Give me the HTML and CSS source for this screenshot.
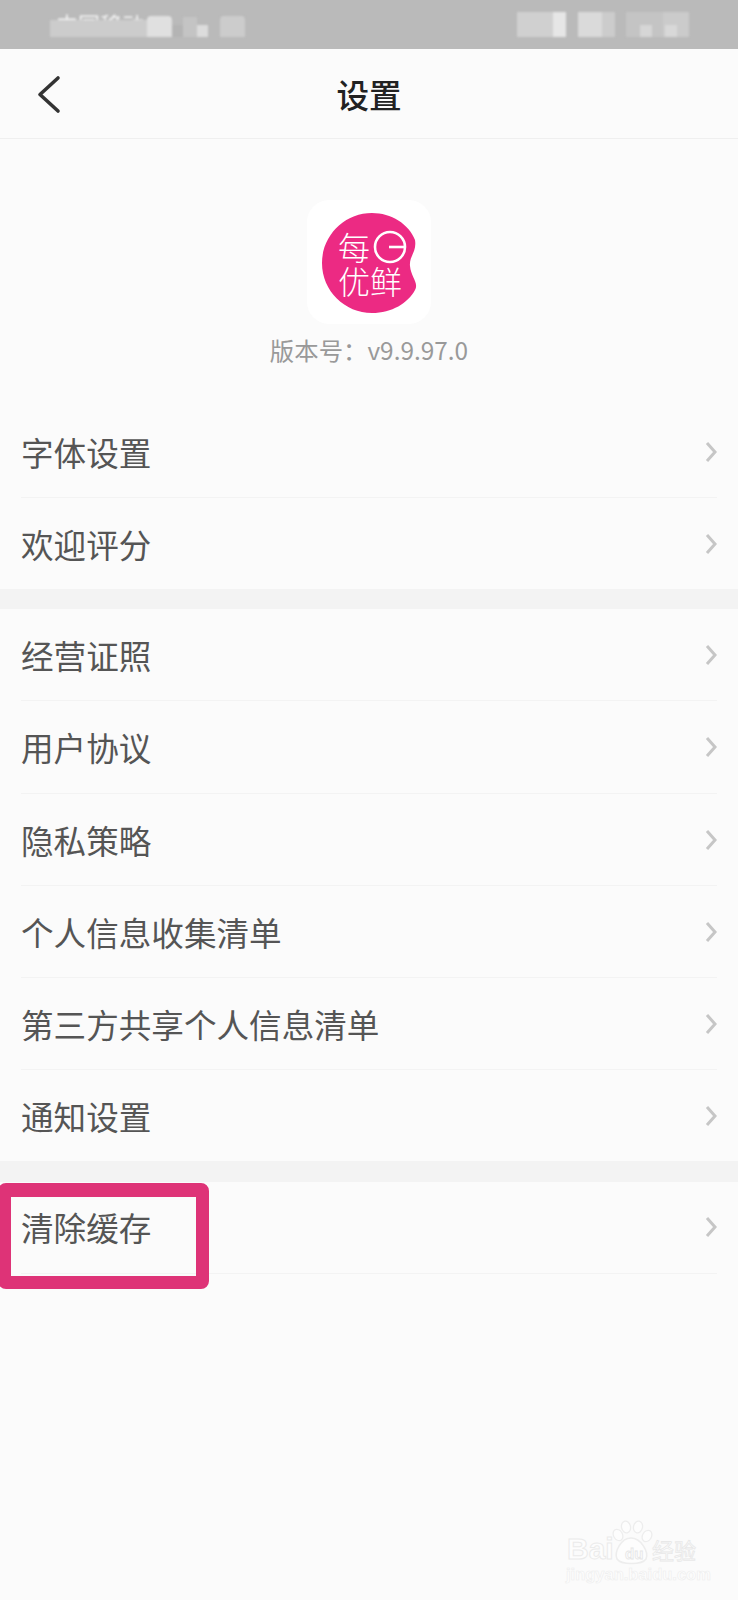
FILE: index.html
```html
<!DOCTYPE html>
<html lang="zh-CN">
<head>
<meta charset="utf-8">
<title>设置</title>
<link rel="stylesheet" href="styles.css">
</head>
<body>
<div class="page">
  <div class="status">
    <div class="mosaic mosaic-left">
      <span class="carrier">中国移动</span>
      <i class="m m1"></i><i class="m m2"></i><i class="m m3"></i><i class="m m4"></i><i class="m m5"></i><i class="m m6"></i>
    </div>
    <div class="mosaic mosaic-right">
      <i class="m r1"></i><i class="m r2"></i><i class="m r3"></i><i class="m r4"></i><i class="m r5"></i><i class="m r6"></i><i class="m r7"></i><i class="m r8"></i>
    </div>
  </div>
  <header class="nav">
    <svg class="back" width="26" height="40" viewBox="0 0 26 40"><path d="M22 4 L4 20.5 L22 37" fill="none" stroke="#333" stroke-width="3.6" stroke-linecap="round" stroke-linejoin="round"/></svg>
    <h1 class="title">设置</h1>
  </header>
  <section class="about">
    <div class="logo">
      <svg width="124" height="124" viewBox="0 0 124 124">
        <path d="M65 13 C38 13 15 35 15 63 C15 91 38 113 65 113 C85 113 101 103 108 90 C112 83 104 77 103 66 C102 56 110 52 108 40 C102 24 84 13 65 13 Z" fill="#ec2a83"/>
        <text class="logo-text" x="31" y="60">每</text>
        <circle cx="83" cy="47" r="15" fill="none" stroke="#fff" stroke-width="2.6"/>
        <path d="M82 47 H98" stroke="#fff" stroke-width="2.6"/>
        <text class="logo-text" x="31" y="94">优鲜</text>
      </svg>
    </div>
    <p class="version">版本号：v9.9.97.0</p>
  </section>
  <ul class="group group-a">
    <li class="row"><span>字体设置</span><svg class="chev" width="12" height="22" viewBox="0 0 12 22"><path d="M2 2 L10 11 L2 20" fill="none" stroke="#c6c6c6" stroke-width="3"/></svg></li>
    <li class="row"><span>欢迎评分</span><svg class="chev" width="12" height="22" viewBox="0 0 12 22"><path d="M2 2 L10 11 L2 20" fill="none" stroke="#c6c6c6" stroke-width="3"/></svg></li>
  </ul>
  <ul class="group group-b">
    <li class="row"><span>经营证照</span><svg class="chev" width="12" height="22" viewBox="0 0 12 22"><path d="M2 2 L10 11 L2 20" fill="none" stroke="#c6c6c6" stroke-width="3"/></svg></li>
    <li class="row row-tall"><span>用户协议</span><svg class="chev" width="12" height="22" viewBox="0 0 12 22"><path d="M2 2 L10 11 L2 20" fill="none" stroke="#c6c6c6" stroke-width="3"/></svg></li>
    <li class="row"><span>隐私策略</span><svg class="chev" width="12" height="22" viewBox="0 0 12 22"><path d="M2 2 L10 11 L2 20" fill="none" stroke="#c6c6c6" stroke-width="3"/></svg></li>
    <li class="row"><span>个人信息收集清单</span><svg class="chev" width="12" height="22" viewBox="0 0 12 22"><path d="M2 2 L10 11 L2 20" fill="none" stroke="#c6c6c6" stroke-width="3"/></svg></li>
    <li class="row"><span>第三方共享个人信息清单</span><svg class="chev" width="12" height="22" viewBox="0 0 12 22"><path d="M2 2 L10 11 L2 20" fill="none" stroke="#c6c6c6" stroke-width="3"/></svg></li>
    <li class="row row-short"><span>通知设置</span><svg class="chev" width="12" height="22" viewBox="0 0 12 22"><path d="M2 2 L10 11 L2 20" fill="none" stroke="#c6c6c6" stroke-width="3"/></svg></li>
  </ul>
  <ul class="group group-c">
    <li class="row row-sep"><span>清除缓存</span><svg class="chev" width="12" height="22" viewBox="0 0 12 22"><path d="M2 2 L10 11 L2 20" fill="none" stroke="#c6c6c6" stroke-width="3"/></svg></li>
  </ul>
  <div class="highlight"></div>
  <div class="watermark">
    <svg class="paw" width="42" height="46" viewBox="0 0 42 46">
      <ellipse cx="7" cy="15" rx="4.5" ry="6" fill="#fdfdfd" stroke="#ededed" stroke-width="1.3" transform="rotate(-30 7 15)"/>
      <ellipse cx="15" cy="7" rx="4.5" ry="6" fill="#fdfdfd" stroke="#ededed" stroke-width="1.3" transform="rotate(-12 15 7)"/>
      <ellipse cx="27" cy="7" rx="4.5" ry="6" fill="#fdfdfd" stroke="#ededed" stroke-width="1.3" transform="rotate(12 27 7)"/>
      <ellipse cx="36" cy="16" rx="4.5" ry="6" fill="#fdfdfd" stroke="#ededed" stroke-width="1.3" transform="rotate(30 36 16)"/>
      <path d="M20 18 C30 18 38 32 35 39 C31 45 10 45 6 39 C3 32 10 18 20 18 Z" fill="#fdfdfd" stroke="#ededed" stroke-width="1.6"/>
    </svg>
    <div class="wm-top"><span class="wm-bai">Bai</span><span class="wm-du">du</span><span class="wm-cn">经验</span></div>
    <div class="wm-url">jingyan.baidu.com</div>
  </div>
</div>
</body>
</html>
```
FILE: styles.css
```css
* { box-sizing: border-box; }
html, body { margin: 0; padding: 0; }
body { font-family: "Noto Sans CJK SC", "Noto Sans", sans-serif; background: #fbfbfb; }
.page { position: relative; width: 738px; height: 1600px; overflow: hidden; background: #fbfbfb; }

.status { height: 49px; background: #bababa; display: flex; justify-content: space-between; align-items: flex-start; padding: 12px 49px 0 50px; }
.mosaic { position: relative; height: 25px; filter: blur(0.8px); }
.mosaic-left { width: 197px; }
.mosaic-right { width: 172px; }
.carrier { position: absolute; left: 6px; top: 0; color: #f4f4f4; font-size: 22px; line-height: 22px; white-space: nowrap; }
.m { position: absolute; display: block; bottom: 0; }
.m1 { left: 0; width: 97px; height: 17px; background: #cccccc; }
.m2 { left: 97px; width: 25px; height: 21px; background: #e0e0e0; border-radius: 4px 4px 0 0; }
.m3 { left: 122px; width: 11px; height: 12px; background: #b4b4b4; }
.m4 { left: 133px; width: 14px; height: 20px; background: #c4c4c4; }
.m5 { left: 147px; width: 11px; height: 12px; background: #dcdcdc; }
.m6 { left: 170px; width: 25px; height: 21px; background: #cccccc; border-radius: 4px 4px 0 0; }
.r1 { left: 0; width: 36px; height: 25px; background: #d0d0d0; }
.r2 { left: 36px; width: 13px; height: 25px; background: #e6e6e6; }
.r3 { left: 61px; width: 24px; height: 25px; background: #dadada; }
.r4 { left: 85px; width: 13px; height: 25px; background: #cccccc; }
.r5 { left: 109px; width: 37px; height: 25px; background: #c4c4c4; }
.r6 { left: 123px; width: 12px; height: 12px; background: #d6d6d6; }
.r7 { left: 146px; width: 26px; height: 25px; background: #cbcbcb; }
.r8 { left: 148px; width: 12px; height: 12px; background: #d8d8d8; }

.nav { height: 90px; display: flex; align-items: center; justify-content: center; position: relative; border-bottom: 1px solid #efefef; background: #fbfbfb; }
.back { position: absolute; left: 36px; top: 25px; }
.title { margin: 0; font-size: 32.6px; font-weight: 500; color: #222; line-height: 44px; }

.about { height: 268px; padding-top: 61px; display: flex; flex-direction: column; align-items: center; }
.logo { width: 124px; height: 124px; border-radius: 22px; background: #fff; }
.logo svg { display: block; }
.logo-text { font-size: 32px; fill: #fff; font-family: "Noto Sans CJK SC", sans-serif; font-weight: 300; }
.version { margin: 8px 0 0; font-size: 24.4px; line-height: 36px; color: #999; }

.group { list-style: none; margin: 0; padding: 0 21px; }
.group-a { height: 182px; box-shadow: 0 20px 0 0 #f3f3f3; }
.group-b { height: 552px; margin-top: 20px; background: #fbfbfb; box-shadow: 0 21px 0 0 #f3f3f3; }
.group-c { margin-top: 21px; }
.row { height: 92px; display: flex; align-items: center; justify-content: space-between; border-bottom: 1px solid #f3f3f3; color: #555; font-size: 32.6px; line-height: 44px; }
.group-a .row { height: 91px; }
.row:last-child { border-bottom: 0; }
.group-b .row-tall { height: 93px; }
.group-b .row-short { height: 91px; }
.group-c .row-sep { border-bottom: 1px solid #f3f3f3; height: 92px; padding-bottom: 2px; }
.chev { display: block; }

.highlight { position: absolute; left: -2px; top: 1183px; width: 211px; height: 106px; border: solid #de3377; border-width: 14px 13px 13px 13px; border-radius: 8px; }

.watermark { position: absolute; left: 565px; top: 1518px; width: 140px; height: 70px; }
.paw { position: absolute; left: 46px; top: 2px; }
.wm-top { position: absolute; left: 2px; top: 14px; display: flex; align-items: baseline; white-space: nowrap; }
.wm-bai { font-family: "Liberation Sans", sans-serif; font-weight: 700; font-size: 30px; color: #fdfdfd; -webkit-text-stroke: 1px #ebebeb; width: 55px; }
.wm-du { position: relative; font-family: "Liberation Sans", sans-serif; font-weight: 700; font-size: 15px; color: #fdfdfd; -webkit-text-stroke: 0.8px #e6e6e6; width: 30px; padding-left: 3px; }
.wm-cn { font-size: 22px; color: #fdfdfd; -webkit-text-stroke: 0.8px #e8e8e8; }
.wm-url { position: absolute; left: 1px; top: 47px; font-family: "Liberation Sans", sans-serif; font-size: 16.5px; font-weight: 700; color: #fdfdfd; -webkit-text-stroke: 0.6px #eeeeee; white-space: nowrap; }
```
